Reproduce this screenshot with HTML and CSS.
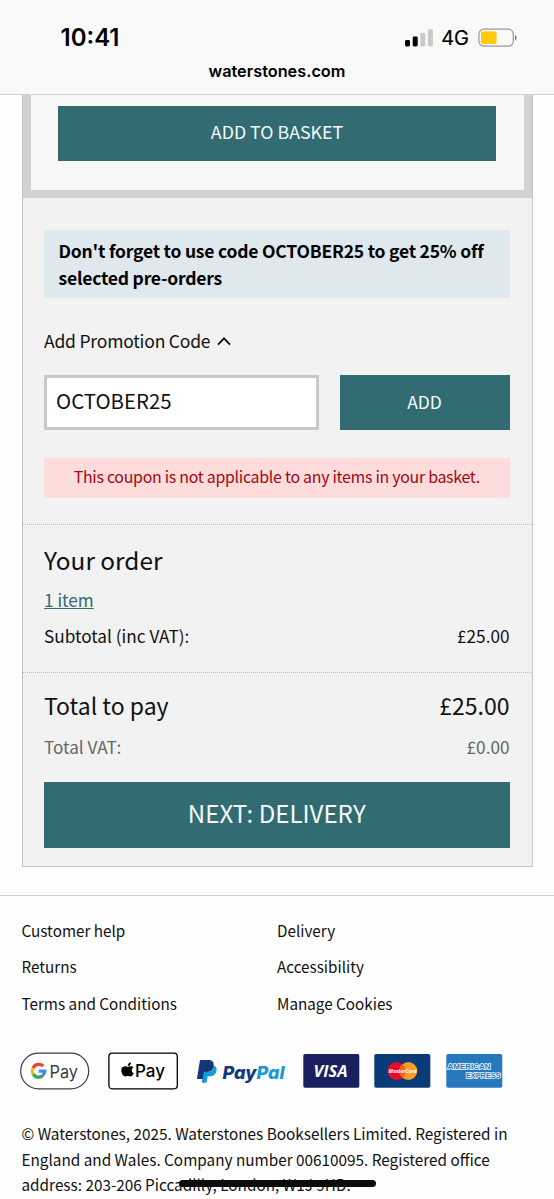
FILE: index.html
```html
<!DOCTYPE html>
<html lang="en">
<head>
<meta charset="utf-8">
<title>Waterstones basket</title>
<link rel="stylesheet" href="styles.css">
</head>
<body>
<header class="browser">
  <div class="status">
    <span class="time">10:41</span>
    <div class="indicators">
      <svg class="signal" width="28" height="18" viewBox="0 0 28 18">
        <rect x="0" y="11" width="5" height="6.5" rx="1.4" fill="#000"/>
        <rect x="7.7" y="7.6" width="5" height="9.9" rx="1.4" fill="#000"/>
        <rect x="15.3" y="4" width="5" height="13.5" rx="1.4" fill="#c9c9c9"/>
        <rect x="22.9" y="0.2" width="5" height="17.3" rx="1.4" fill="#c9c9c9"/>
      </svg>
      <span class="network">4G</span>
      <svg class="battery" width="40" height="20" viewBox="0 0 40 20">
        <rect x="0.9" y="1.2" width="34.4" height="17" rx="5" fill="none" stroke="#999" stroke-width="1.2"/>
        <rect x="3" y="3.3" width="15.6" height="12.8" rx="2.6" fill="#ffca0a"/>
        <path d="M37 7v5.400c2-.7 2-4.700 0-5.400z" fill="#777"/>
      </svg>
    </div>
  </div>
  <div class="address">waterstones.com</div>
</header>
<main class="basket">
  <section class="product"><button class="btn btn-basket">ADD TO BASKET</button></section>
  <section class="promo">
    <p class="notice">Don't forget to use code OCTOBER25 to get 25% off<br>selected pre-orders</p>
    <div class="promo-toggle"><span>Add Promotion Code</span>
      <svg width="14" height="9" viewBox="0 0 14 9"><path d="M1 7.600 7 1.400l6 6.200" fill="none" stroke="#111" stroke-width="1.800"/></svg>
    </div>
    <div class="promo-form">
      <div class="code">OCTOBER25</div>
      <button class="btn btn-add">ADD</button>
    </div>
    <p class="error">This coupon is not applicable to any items in your basket.</p>
  </section>
  <section class="order">
    <h2 class="title">Your order</h2>
    <a class="items">1 item</a>
    <div class="row subtotal"><span>Subtotal (inc VAT):</span><span>£25.00</span></div>
  </section>
  <section class="total">
    <div class="row pay"><span>Total to pay</span><span>£25.00</span></div>
    <div class="row vat"><span>Total VAT:</span><span>£0.00</span></div>
    <button class="btn btn-next">NEXT: DELIVERY</button>
  </section>
</main>
<footer class="footer">
  <nav class="links">
    <a>Customer help</a><a>Delivery</a>
    <a>Returns</a><a>Accessibility</a>
    <a>Terms and Conditions</a><a>Manage Cookies</a>
  </nav>
  <div class="payments">
    <svg width="70" height="38" viewBox="0 0 70 38">
      <rect x="0.700" y="1.200" width="68" height="35.600" rx="17.800" fill="#fff" stroke="#3c4043" stroke-width="1.200"/>
      <g fill="none" stroke-width="3.200" transform="translate(0 .6)">
        <path d="M23.300 13.600A6.200 6.200 0 0 0 13.100 15.600" stroke="#ea4335"/>
        <path d="M13.100 15.600A6.200 6.200 0 0 0 13.200 21.500" stroke="#fbbc04"/>
        <path d="M13.200 21.500A6.200 6.200 0 0 0 22.600 23.100" stroke="#34a853"/>
        <path d="M22.600 23.100A6.200 6.200 0 0 0 24.800 18.600H18.700" stroke="#4285f4"/>
      </g>
      <text class="gpay" x="29.500" y="25.600" textLength="28.500" lengthAdjust="spacingAndGlyphs">Pay</text>
    </svg>
    <svg width="70" height="38" viewBox="0 0 70 38">
      <rect x="0.900" y="1.200" width="68.400" height="35.600" rx="3.200" fill="#fff" stroke="#000" stroke-width="1.300"/>
      <path transform="translate(-.6 .6)" d="M20.300 14.300c1.200 0 2-.9 3.300-.7 1 .1 1.800.5 2.300 1.200-2.400 1.600-1.900 4.700.5 5.700-.5 1.400-1.500 3.400-2.900 3.400-1 0-1.500-.6-2.900-.6s-1.800.6-2.800.6c-2.400 0-4.800-5-3.600-7.900 1-2.500 3.700-2.800 5-2.100zM20.300 13.500c-.1-2 1.300-3.700 3.200-3.900.3 2.100-1.300 3.900-3.200 3.900z" fill="#000"/>
      <text class="apay" x="27" y="25" textLength="30" lengthAdjust="spacingAndGlyphs">Pay</text>
    </svg>
    <svg width="89" height="38" viewBox="0 0 89 38">
      <path d="M6 12.300h8.200c4 0 5.200 2.600 4.200 6-1 3.600-3.400 4.700-6.900 4.700H9.800l-1.200 6.500H3.800z" fill="#179bd7" transform="translate(1.900 1.200)"/>
      <path d="M4 8h8.300c4.500 0 6.100 2.400 5.200 6.200-.9 3.900-3.700 5.200-7.300 5.200H8l-1.300 7.700H.9z" fill="#14387f"/>
      <path d="M10 13h6.800c0 3.900-2.700 6.400-6.800 6.400H8.400z" fill="#222d65"/>
      <text class="paypal" x="26.500" y="27" textLength="34" lengthAdjust="spacingAndGlyphs" fill="#14387f">Pay</text>
      <text class="paypal" x="60.500" y="27" textLength="28" lengthAdjust="spacingAndGlyphs" fill="#179bd7">Pal</text>
    </svg>
    <div class="cards">
      <svg width="57" height="38" viewBox="0 0 57 38">
        <rect x="0.300" y="2" width="56" height="33.700" rx="1.800" fill="#1a1f5f"/>
        <text class="visa" x="10.500" y="24.600" textLength="34" lengthAdjust="spacingAndGlyphs">VISA</text>
      </svg>
      <svg width="57" height="38" viewBox="0 0 57 38">
        <rect x="0.300" y="2" width="56" height="33.700" rx="1.800" fill="#0a3a78"/>
        <circle cx="22.700" cy="19" r="9" fill="#eb0a2b"/>
        <circle cx="34.300" cy="19" r="9" fill="#f79e2a"/>
        <path d="M28.500 12.100a9 9 0 0 1 0 13.800 9 9 0 0 1 0-13.800z" fill="#ee6424"/>
        <text class="mastercard" x="14.500" y="21.200" textLength="28" lengthAdjust="spacingAndGlyphs">MasterCard</text>
      </svg>
      <svg width="57" height="38" viewBox="0 0 57 38">
        <rect x="0.300" y="2" width="56" height="33.700" rx="1.800" fill="#2878bd"/>
        <text class="amex" x="1.500" y="17" textLength="43" lengthAdjust="spacingAndGlyphs">AMERICAN</text>
        <text class="amex" x="20" y="26" textLength="34.500" lengthAdjust="spacingAndGlyphs">EXPRESS</text>
      </svg>
    </div>
  </div>
  <p class="legal">© Waterstones, 2025. Waterstones Booksellers Limited. Registered in<br>England and Wales. Company number 00610095. Registered office<br>address: 203-206 Piccadilly, London, W1J 9HD.</p>
</footer>
<div class="home-bar"></div>
</body>
</html>
```
FILE: styles.css
```css
* { box-sizing: border-box; }
html, body { height: 1199px; overflow: hidden; }
body {
  margin: 0;
  position: relative;
  background: #fefefe;
  color: #111;
  font-family: "Noto Sans CJK SC", "Noto Sans", sans-serif;
  font-size: 16px;
}
p, h2 { margin: 0; font-weight: 400; }
.browser {
  height: 94.500px;
  padding-top: 22px;
  background: #f9f9f9;
  border-bottom: 1.500px solid #d0d0d0;
  font-family: Inter, sans-serif;
  color: #000;
}
.status { display: flex; justify-content: space-between; height: 31px; padding: 0 36px 0 60.500px; align-items: center; }
.time { font-size: 24px; font-weight: 600; line-height: 30px; }
.indicators { display: flex; align-items: center; }
.network { font-size: 20px; font-weight: 400; margin: 0 9px 0 8px; -webkit-text-stroke: 0.200px #000; }
.address { text-align: center; font-size: 16.300px; font-weight: 600; line-height: 20px; padding-top: 8px; }
.basket { width: 511px; height: 772px; margin-left: 21.500px; background: #f2f2f2; border: 1.500px solid #c4c4c4; border-top: 0; }
.product { height: 103px; padding: 11px 28px 0; background: #f8f8f8; border: 8px solid #d2d2d2; border-top: 0; }
.btn {
  display: block;
  border: 0;
  padding: 0 0 3px;
  background: #336b73;
  color: #f4fbfb;
  font-family: inherit;
  text-align: center;
}
.btn-basket { width: 438px; height: 55px; padding-bottom: 5px; font-size: 17.800px; margin-left: -0.500px; }
.promo { height: 327px; padding: 32.500px 22px 0 21.500px; border-bottom: 1px dotted #bbb; }
.notice { height: 68px; padding: 6.500px 14.500px; background: #dfe8ed; color: #000; font-size: 17.500px; font-weight: 700; line-height: 27px; letter-spacing: -0.210px; white-space: nowrap; }
.promo-toggle { display: flex; align-items: center; gap: 7px; height: 27px; margin-top: 30px; font-size: 17.500px; line-height: 27px; letter-spacing: -0.200px; }
.promo-toggle span { margin-top: -2px; }
.promo-form { display: flex; justify-content: space-between; margin-top: 20px; }
.code { width: 275px; height: 55px; padding: 0 9px; background: #fff; border: 3px solid #c8c8c8; font-size: 20.400px; line-height: 45px; }
.btn-add { width: 170px; height: 55px; font-size: 17.500px; }
.error { height: 40px; margin-top: 28px; background: #ffdcdc; color: #a3070f; text-align: center; font-size: 15.900px; line-height: 38px; letter-spacing: -0.270px; white-space: nowrap; }
.order { height: 148px; padding: 17px 22px 0 21.500px; border-bottom: 1px dotted #bbb; }
.title { font-size: 24.400px; line-height: 36px; }
.items { display: block; margin-top: 9px; font-size: 17.200px; line-height: 26px; color: #336b73; text-decoration: underline; }
.row { display: flex; justify-content: space-between; }
.subtotal { margin-top: 10px; font-size: 17.200px; line-height: 25px; }
.total { padding: 14px 22px 0 21.500px; }
.pay { font-size: 23px; line-height: 36px; }
.vat { margin-top: 11px; font-size: 17.200px; line-height: 26px; color: #666; }
.btn-next { width: 100%; height: 66px; margin-top: 22.500px; padding-bottom: 5px; font-size: 24.100px; }
.footer { margin-top: 28px; padding: 16px 21.500px 0; border-top: 1.500px solid #d0d0d0; }
.links { display: grid; grid-template-columns: 255.500px 1fr; grid-auto-rows: 36.700px; font-size: 15.250px; line-height: 37px; }
.payments { display: flex; height: 38px; margin: 30.500px 0 0 -1.500px; gap: 18px; }
.payments svg { flex: none; }
.cards { display: flex; gap: 14.300px; }
.gpay { font: 400 17.500px Inter, sans-serif; fill: #3c4043; }
.apay { font: 500 17px Inter, sans-serif; fill: #000; }
.paypal { font: italic 800 18px Inter, sans-serif; }
.visa { font: italic 700 16px "Open Sans", sans-serif; fill: #fff; }
.mastercard { font: italic 700 6px "Open Sans", sans-serif; fill: #fff; }
.amex { font: 700 8px "Liberation Sans", sans-serif; fill: #2878bd; stroke: #f0f7fd; stroke-width: 1.600px; paint-order: stroke; }
.legal { margin-top: 31px; font-size: 15.320px; line-height: 25.700px; white-space: nowrap; }
.home-bar { position: absolute; left: 179px; top: 1180px; width: 197px; height: 7px; border-radius: 4px; background: #0c0c0c; }
```
